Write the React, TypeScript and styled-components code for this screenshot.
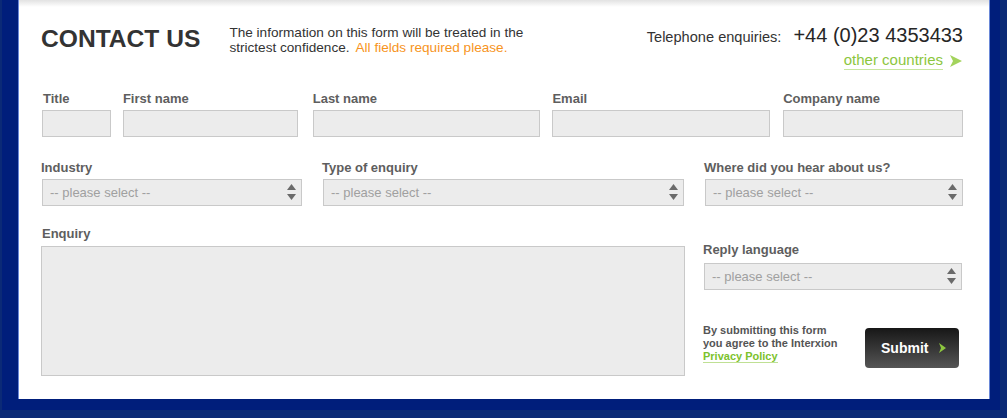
import React from "react";
import styled, { createGlobalStyle } from "styled-components";

const GlobalStyle = createGlobalStyle`
  html, body { margin: 0; padding: 0; }
  body {
    background: #0b2a76;
    font-family: "Liberation Sans", Arial, Helvetica, sans-serif;
  }
  * { box-sizing: border-box; }
`;

const Frame = styled.div`
  width: 998px;
  height: 410px;
  margin-left: 2px;
  background: #001e7b;
  padding: 0 10px 11px 16px;
`;

const Panel = styled.div`
  height: 399px;
  background: linear-gradient(#e2e2e2 0px, #ffffff 7px);
  border-left: 1px solid #6a88d8;
  border-right: 1px solid #6a88d8;
  padding: 25px 26px 0 22px;
`;

const Header = styled.div`
  display: flex;
  align-items: flex-start;
  height: 66px;
`;

const Title = styled.h1`
  margin: 0;
  font-size: 24.6px;
  line-height: 28px;
  font-weight: bold;
  color: #333333;
  white-space: nowrap;
`;

const Info = styled.p`
  margin: 0 0 0 29px;
  font-size: 13.6px;
  line-height: 15px;
  color: #333333;
  white-space: nowrap;
`;

const Required = styled.span`
  color: #f7941d;
  margin-left: 6px;
`;

const Phone = styled.div`
  margin-left: auto;
  margin-top: -2px;
  display: flex;
  flex-direction: column;
  align-items: flex-end;
`;

const PhoneLine = styled.div`
  display: flex;
  align-items: baseline;
  line-height: 24px;
`;

const PhoneLabel = styled.span`
  font-size: 14.6px;
  color: #333333;
`;

const PhoneNumber = styled.span`
  font-size: 20px;
  color: #262626;
  margin-left: 12px;
`;

const Countries = styled.a`
  display: flex;
  align-items: center;
  margin-top: 2px;
  text-decoration: none;
  cursor: pointer;
`;

const CountriesText = styled.span`
  font-size: 15px;
  line-height: 18px;
  color: #8cc63e;
  border-bottom: 1px solid #c8e6a0;
`;

const Chevron = styled.svg`
  display: block;
  margin-left: 7px;
  margin-right: 1px;
`;

const Row = styled.div<{ $mt?: number }>`
  display: flex;
  align-items: flex-start;
  margin-top: ${(p) => p.$mt ?? 0}px;
`;

const Field = styled.div<{ $w: number; $ml?: number }>`
  width: ${(p) => p.$w}px;
  margin-left: ${(p) => p.$ml ?? 0}px;
  display: flex;
  flex-direction: column;
`;

const Label = styled.label<{ $gap?: number; $indent?: number }>`
  display: block;
  font-size: 13px;
  line-height: 15px;
  font-weight: bold;
  color: #5e5e5e;
  margin-bottom: ${(p) => p.$gap ?? 4}px;
  padding-left: ${(p) => p.$indent ?? 0}px;
  padding-top: 1px;
  margin-top: -1px;
  white-space: nowrap;
`;

const TextInput = styled.input`
  display: block;
  width: 100%;
  height: 27px;
  margin: 0;
  background: #ececec;
  border: 1px solid #c9c9c9;
  border-radius: 0;
  outline: none;
  font: inherit;
`;

const SelectWrap = styled.div<{ $ml?: number }>`
  position: relative;
  margin-left: ${(p) => p.$ml ?? 1}px;
  height: 27px;
`;

const Select = styled.select`
  display: block;
  width: 100%;
  height: 27px;
  margin: 0;
  appearance: none;
  -webkit-appearance: none;
  background: #ececec;
  border: 1px solid #c9c9c9;
  border-radius: 0;
  padding: 0 20px 1px 7px;
  font-family: "Liberation Sans", Arial, sans-serif;
  font-size: 13px;
  color: #a0a0a0;
  outline: none;
`;

const Arrows = styled.svg`
  position: absolute;
  right: 6px;
  top: 5px;
  pointer-events: none;
`;

const TextArea = styled.textarea`
  display: block;
  width: 644px;
  height: 130px;
  margin: 0;
  background: #ececec;
  border: 1px solid #c9c9c9;
  border-radius: 0;
  resize: none;
  outline: none;
  font: inherit;
`;

const Side = styled.div`
  width: 259px;
  margin-left: 18px;
  margin-top: 16px;
  display: flex;
  flex-direction: column;
`;

const SubmitArea = styled.div`
  display: flex;
  align-items: flex-start;
  justify-content: space-between;
  margin-top: 34px;
  padding-right: 3px;
`;

const Disclaimer = styled.p`
  margin: 0;
  font-size: 11px;
  line-height: 13px;
  font-weight: bold;
  color: #555555;
  white-space: nowrap;
`;

const Privacy = styled.a`
  color: #7cc22c;
  text-decoration: none;
  border-bottom: 1px solid #bfe094;
  cursor: pointer;
`;

const SubmitButton = styled.button`
  margin-top: 4px;
  width: 94px;
  height: 40px;
  border: none;
  border-radius: 4px;
  background: linear-gradient(#171717, #555555);
  color: #ffffff;
  font-family: "Liberation Sans", Arial, sans-serif;
  font-size: 14px;
  font-weight: bold;
  display: flex;
  align-items: center;
  padding: 0 0 0 16px;
  cursor: pointer;
`;

const SubmitArrow = styled.svg`
  display: block;
  margin-left: 11px;
`;

function SelectArrows() {
  return (
    <Arrows width="9" height="16" viewBox="0 0 9 16">
      <polygon points="4.5,0 9,6 0,6" fill="#6a6a6a" />
      <polygon points="0,10 9,10 4.5,16" fill="#6a6a6a" />
    </Arrows>
  );
}

function PleaseSelect({ ml }: { ml?: number }) {
  return (
    <SelectWrap $ml={ml}>
      <Select defaultValue="">
        <option value="">-- please select --</option>
      </Select>
      <SelectArrows />
    </SelectWrap>
  );
}

export default function App() {
  return (
    <>
      <GlobalStyle />
      <Frame>
        <Panel>
          <Header>
            <Title>CONTACT US</Title>
            <Info>
              The information on this form will be treated in the
              <br />
              strictest confidence.
              <Required>All fields required please.</Required>
            </Info>
            <Phone>
              <PhoneLine>
                <PhoneLabel>Telephone enquiries:</PhoneLabel>
                <PhoneNumber>+44 (0)23 4353433</PhoneNumber>
              </PhoneLine>
              <Countries>
                <CountriesText>other countries</CountriesText>
                <Chevron width="12" height="12" viewBox="0 0 12 12">
                  <polygon points="0,0 12,6 0,12 3,6" fill="#a3d35c" />
                </Chevron>
              </Countries>
            </Phone>
          </Header>

          <Row>
            <Field $w={69} $ml={1}>
              <Label $indent={1}>Title</Label>
              <TextInput />
            </Field>
            <Field $w={175} $ml={12}>
              <Label>First name</Label>
              <TextInput />
            </Field>
            <Field $w={228} $ml={15}>
              <Label>Last name</Label>
              <TextInput />
            </Field>
            <Field $w={218} $ml={12}>
              <Label>Email</Label>
              <TextInput />
            </Field>
            <Field $w={180} $ml={13}>
              <Label>Company name</Label>
              <TextInput />
            </Field>
          </Row>

          <Row $mt={23}>
            <Field $w={261}>
              <Label>Industry</Label>
              <PleaseSelect />
            </Field>
            <Field $w={362} $ml={20}>
              <Label>Type of enquiry</Label>
              <PleaseSelect />
            </Field>
            <Field $w={259} $ml={20}>
              <Label>Where did you hear about us?</Label>
              <PleaseSelect />
            </Field>
          </Row>

          <Row $mt={20}>
            <Field $w={644}>
              <Label $gap={5} $indent={1}>Enquiry</Label>
              <TextArea />
            </Field>
            <Side>
              <Label $gap={6}>Reply language</Label>
              <PleaseSelect />
              <SubmitArea>
                <Disclaimer>
                  By submitting this form
                  <br />
                  you agree to the Interxion
                  <br />
                  <Privacy>Privacy Policy</Privacy>
                </Disclaimer>
                <SubmitButton type="button">
                  Submit
                  <SubmitArrow width="7" height="10" viewBox="0 0 7 10">
                    <polygon points="0,0 7,5 0,10 2,5" fill="#8dc63f" />
                  </SubmitArrow>
                </SubmitButton>
              </SubmitArea>
            </Side>
          </Row>
        </Panel>
      </Frame>
    </>
  );
}
